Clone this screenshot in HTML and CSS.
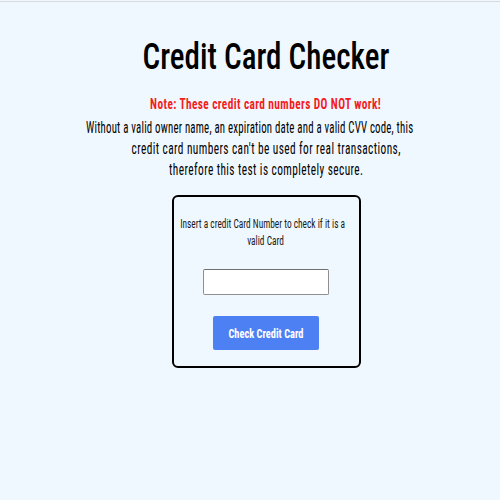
FILE: index.html
```html
<!DOCTYPE html>
<html>
<head>
<meta charset="utf-8">
<link rel="stylesheet" href="styles.css">
</head>
<body>
<div class="topline"></div>
<main class="page">
  <h1 class="title shifted">Credit Card Checker</h1>
  <p class="note shifted">Note: These credit card numbers DO NOT work!</p>
  <div class="desc">
    <span class="desc-line first">Without a valid owner name, an expiration date and a valid CVV code, this</span>
    <span class="desc-line shifted">credit card numbers can't be used for real transactions,</span>
    <span class="desc-line shifted">therefore this test is completely secure.</span>
  </div>
  <div class="card shifted">
    <p class="card-text"><span class="card-line first">Insert a credit Card Number to check if it is a</span><span class="card-line">valid Card</span></p>
    <input class="card-input" type="text">
    <button class="card-btn"><span class="btn-label">Check Credit Card</span></button>
  </div>
</main>
</body>
</html>
```
FILE: styles.css
```css
html, body {
  margin: 0;
  padding: 0;
  background: #f0f8ff;
  font-family: "Roboto Condensed", Roboto, "Liberation Sans", sans-serif;
  overflow: hidden;
}
.topline {
  height: 1px;
  margin-top: 1px;
  background: #d9dcdf;
}
.page {
  display: flex;
  flex-direction: column;
  align-items: center;
  text-align: center;
}
.shifted {
  margin-left: 32px;
}
.title {
  margin-top: 34px;
  margin-bottom: 0;
  font-size: 36px;
  font-weight: 500;
  line-height: 42px;
  color: #000;
  white-space: nowrap;
  transform: scaleX(0.863);
}
.note {
  margin-top: 16px;
  margin-bottom: 0;
  font-size: 14px;
  font-weight: 700;
  color: #f41c1c;
  letter-spacing: 0.5px;
  line-height: 20px;
  white-space: nowrap;
  transform: scaleX(0.81);
}
.desc {
  margin-top: 3px;
  align-self: stretch;
  display: flex;
  flex-direction: column;
  align-items: center;
}
.desc-line {
  display: block;
  font-size: 16px;
  line-height: 21px;
  letter-spacing: 0.6px;
  color: #000;
  white-space: nowrap;
  transform: scaleX(0.708);
}
.desc-line.first {
  letter-spacing: 0.3px;
  transform: scaleX(0.677);
}
.card {
  margin-top: 15px;
  width: 185px;
  height: 169px;
  border: 2px solid #000;
  border-radius: 6px;
  display: flex;
  flex-direction: column;
  align-items: center;
}
.card-text {
  margin: 18px -50px 0;
  font-size: 13px;
  line-height: 17px;
  color: #1a1a1a;
  white-space: nowrap;
  transform: scaleX(0.72);
}
.card-line {
  display: block;
}
.card-line.first {
  padding-right: 8px;
}
.card-input {
  margin-top: 20px;
  width: 126px;
  height: 26px;
  box-sizing: border-box;
  border: 1px solid #8f8f8f;
  border-top-color: #707070;
  border-radius: 2px;
  background: #fff;
  padding: 0;
}
.card-btn {
  margin-top: 21px;
  width: 106px;
  height: 34px;
  border: none;
  border-radius: 2px;
  background: #4d80f2;
  color: #fff;
  font-family: inherit;
  font-size: 13px;
  font-weight: 700;
  padding: 0;
}
.btn-label {
  display: inline-block;
  white-space: nowrap;
  transform: scaleX(0.8);
}
```
